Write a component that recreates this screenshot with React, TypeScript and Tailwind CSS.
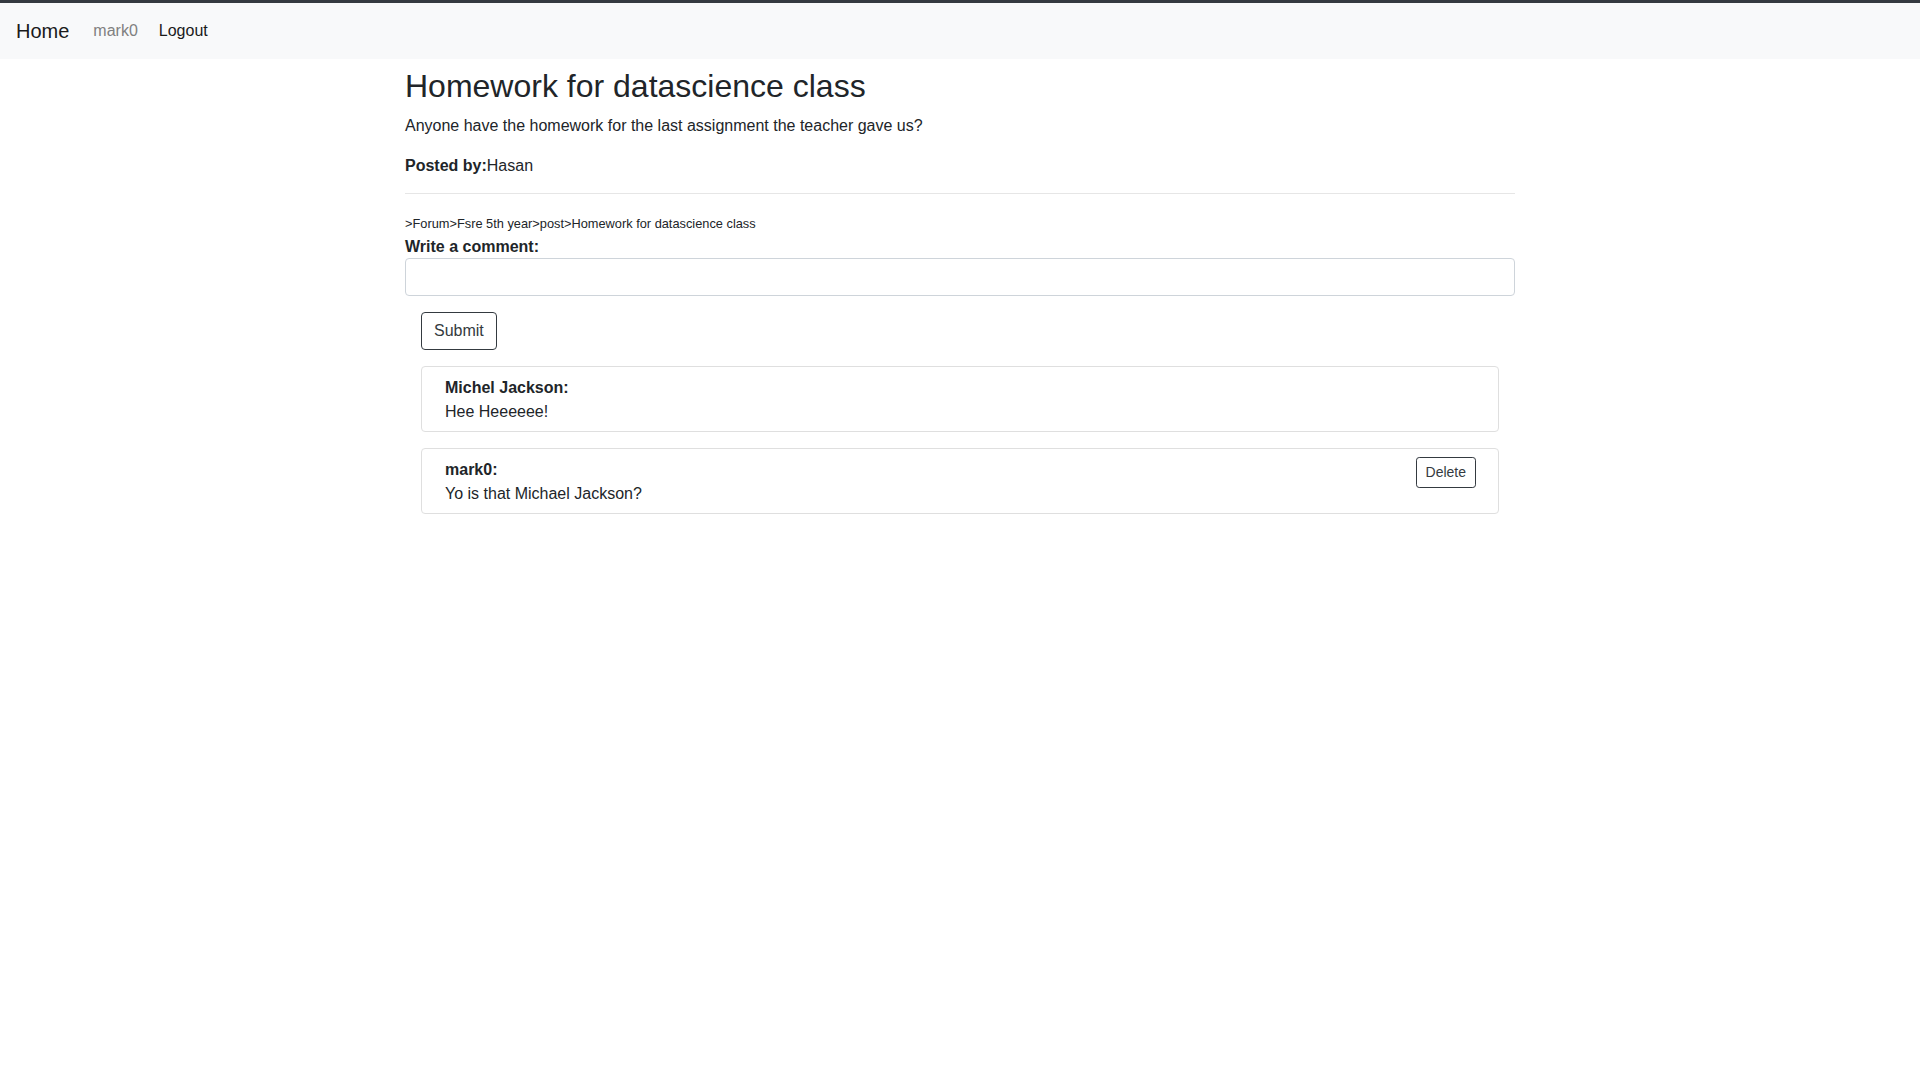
import React from "react";

export default function App() {
  return (
    <div className="min-h-[1082px] bg-white font-['Liberation_Sans',Arial,sans-serif] text-[16px] leading-6 text-[#212529]">
      <div className="border-t-[3px] border-[#343a40] bg-[#f8f9fa]">
        <nav className="flex items-center px-4 py-2">
          <a className="mr-4 py-[5px] text-[20px] leading-[30px] text-[#1a1a1a]">Home</a>
          <span className="px-2 py-2 text-[#808080]">mark0</span>
          <a className="ml-[5px] px-2 py-2 text-[#1a1a1a]">Logout</a>
        </nav>
      </div>
      <div className="mx-auto mt-2 w-[1140px] px-[15px]">
        <h2 className="mb-[9px] text-[32px] leading-[38.4px] font-normal">Homework for datascience class</h2>
        <p className="mb-4">Anyone have the homework for the last assignment the teacher gave us?</p>
        <p className="mb-[15px]">
          <b className="font-bold">Posted by:</b>Hasan
        </p>
        <hr className="mb-[17px] border-t border-[#e6e6e6]" />
        <div className="pt-[1px] leading-[22px]">
          <small className="text-[12.8px]">&gt;Forum&gt;Fsre 5th year&gt;post&gt;Homework for datascience class</small>
        </div>
        <label className="block font-bold leading-[23px]">Write a comment:</label>
        <input type="text" className="block h-[38px] w-full rounded-[4px] border border-[#ced4da] px-3 outline-none" />
        <div className="mx-4 mt-4">
          <button className="rounded-[4px] border border-[#343a40] bg-white px-3 py-1.5 text-[16px] leading-6 text-[#343a40]">
            Submit
          </button>
          <div className="mt-4 flex flex-col gap-4">
            <div className="flex items-start justify-between rounded-[4px] border border-[#dfdfdf] pt-[9px] pb-[7px] pl-[23px] pr-[22px]">
              <div>
                <div className="font-bold">Michel Jackson:</div>
                <div>Hee Heeeeee!</div>
              </div>
            </div>
            <div className="flex items-start justify-between rounded-[4px] border border-[#dfdfdf] pt-[9px] pb-[7px] pl-[23px] pr-[22px]">
              <div>
                <div className="font-bold">mark0:</div>
                <div>Yo is that Michael Jackson?</div>
              </div>
              <button className="-mt-px rounded-[3.2px] border border-[#343a40] bg-white px-[9px] py-1 text-[14px] leading-[21px] text-[#343a40]">
                Delete
              </button>
            </div>
          </div>
        </div>
      </div>
    </div>
  );
}
